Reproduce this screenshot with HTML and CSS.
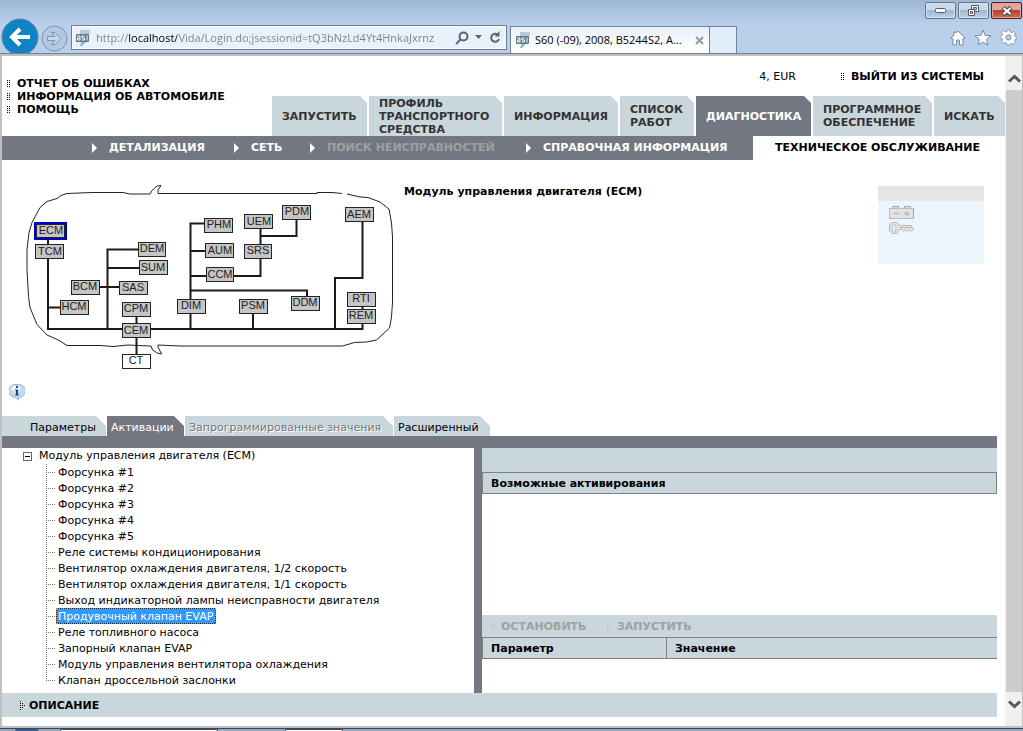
FILE: index.html
```html
<!DOCTYPE html>
<html lang="ru">
<head>
<meta charset="utf-8">
<title>S60 (-09), 2008, B5244S2</title>
<link rel="stylesheet" href="styles.css">
</head>
<body>
<svg class="defs" width="0" height="0" aria-hidden="true">
  <symbol id="asp" viewBox="0 0 14 16">
    <path d="M4 0h10v4l-3 1H4z" fill="#b9cadb"/><path d="M6 10h6l-6 6H4z" fill="#9db3c8"/>
    <rect x="0" y="4" width="13" height="8" rx="1" fill="#5d788f"/>
    <path d="M1 6h3v4H1.500V8H4M8.500 6H6v2h2.500v2H5.500M11 5.500v5" fill="none" stroke="#fff" stroke-width="1"/>
  </symbol>
  <symbol id="grip" viewBox="0 0 3 8"><path d="M0 .5h3M0 2.500h3M0 4.500h3M0 6.500h3" stroke="#000" stroke-dasharray="1 1"/></symbol>
  <symbol id="griparrow" viewBox="0 0 6 9"><path d="M0 .5h1M0 2.500h3M0 4.500h5M0 6.500h3M0 8.500h1" stroke="currentColor" stroke-dasharray="1 1"/></symbol>
</svg>

<header class="chrome">
  <div class="titlebar">
    <button class="win" aria-label="Свернуть"><svg width="12" height="6"><rect x=".5" y=".5" width="10" height="4" rx="1" fill="#fff" stroke="#555a68"/></svg></button>
    <button class="win" aria-label="Восстановить"><svg width="13" height="12"><path d="M4.500 .5h7v6h-7z" fill="#fff" stroke="#555a68"/><path d="M6.500 2.500h3v2h-3z" fill="#b8cbe0" stroke="#555a68"/><path d="M1.500 4.500h6v6h-6z" fill="#fff" stroke="#555a68"/><path d="M3.500 6.500h2v2h-2z" fill="#b8cbe0" stroke="#555a68"/></svg></button>
    <button class="win close" aria-label="Закрыть"><svg width="12" height="10"><path d="M2 1.500l8 7M10 1.500l-8 7" stroke="#555062" stroke-width="4.500"/><path d="M2.500 2l7 6M9.500 2l-7 6" stroke="#fff" stroke-width="2.200"/></svg></button>
  </div>
  <div class="toolbar">
    <button class="back" aria-label="Назад"><svg width="40" height="35" viewBox="0 0 40 35"><circle cx="20" cy="19" r="18" fill="#0e84c4" stroke="#65809b"/><path d="M30 19H13M20 11l-8 8 8 8" fill="none" stroke="#fff" stroke-width="4"/></svg></button>
    <button class="forward" aria-label="Вперёд"><svg width="27" height="27" viewBox="0 0 27 27"><circle cx="13.500" cy="13.500" r="12.500" fill="#b3c8e2" stroke="#7c92af"/><path d="M6.500 11.500h7.500l-3.500-4h3.500l6 6-6 6h-3.500l3.500-4H6.500z" fill="#c5d6ea" stroke="#7c92af"/></svg></button>
    <div class="address">
      <svg width="14" height="16"><use href="#asp"/></svg>
      <input class="url" type="text" aria-label="Адрес" value="http://localhost/Vida/Login.do;jsessionid=tQ3bNzLd4Yt4HnkaJxrnz">
      <button class="mini" aria-label="Поиск"><svg width="14" height="14"><circle cx="8.500" cy="5.500" r="4" fill="none" stroke="#5b6470" stroke-width="2"/><path d="M5.500 8.500L1 13" stroke="#5b6470" stroke-width="2"/></svg></button>
      <button class="mini" aria-label="Журнал"><svg width="8" height="5"><path d="M0 0h7L3.500 4z" fill="#5b6470"/></svg></button>
      <button class="mini" aria-label="Обновить"><svg width="12" height="13"><path d="M9.500 4.500A4 4 0 1 0 10 8" fill="none" stroke="#5b6470" stroke-width="2"/><path d="M10.500 0v5.500H5.500z" fill="#5b6470"/></svg></button>
    </div>
    <div class="btab"><svg width="14" height="16"><use href="#asp"/></svg><span class="btitle">S60 (-09), 2008, B5244S2, A...</span><button class="mini" aria-label="Закрыть вкладку"><svg width="9" height="9"><path d="M1 1l7 7M8 1L1 8" stroke="#999" stroke-width="2"/></svg></button></div>
    <button class="newtab" aria-label="Новая вкладка"></button>
    <div class="tools">
      <button class="mini" aria-label="Домой"><svg width="16" height="16"><path d="M8 1l7 7-1 1-1-.5V15H9.500v-5h-3v5H3V8.500L2 9 1 8l3-3V2h2v1z" fill="#fff" stroke="#7688a3"/></svg></button>
      <button class="mini" aria-label="Избранное"><svg width="18" height="17"><path d="M9 1l2.200 5.500 5.800.3-4.500 3.700 1.500 5.500-5-3-5 3 1.500-5.500L1 6.800l5.800-.3z" fill="#fff" stroke="#7688a3"/></svg></button>
      <button class="mini" aria-label="Сервис"><svg width="17" height="17" viewBox="0 0 17 17"><path d="M7 1h3l.5 2 1.500.5 1.800-1 1.700 1.700-1 1.800.5 1.500 2 .5v2l-2 .5-.5 1.500 1 1.800-1.700 1.700-1.800-1-1.500.5L10 16H7l-.5-2-1.500-.5-1.800 1-1.700-1.700 1-1.800L2 9.500 0 9V7l2-.5L2.500 5l-1-1.800L3.200 1.500l1.800 1L6.500 3z" fill="#fff" stroke="#7688a3" stroke-width=".8"/><circle cx="8.500" cy="8.500" r="2.500" fill="#b9d0ea" stroke="#7688a3"/></svg></button>
    </div>
  </div>
</header>

<div class="viewport">
<main class="page">
  <div class="masthead">
    <nav class="help">
      <a href="#"><svg width="3" height="8"><use href="#grip"/></svg>ОТЧЕТ ОБ ОШИБКАХ</a>
      <a href="#"><svg width="3" height="8"><use href="#grip"/></svg>ИНФОРМАЦИЯ ОБ АВТОМОБИЛЕ</a>
      <a href="#"><svg width="3" height="8"><use href="#grip"/></svg>ПОМОЩЬ</a>
    </nav>
    <div class="right">
      <div class="account"><span>4, EUR</span><a href="#"><svg width="3" height="8"><use href="#grip"/></svg>ВЫЙТИ ИЗ СИСТЕМЫ</a></div>
      <nav class="tabs">
        <a class="t1" href="#">ЗАПУСТИТЬ</a>
        <a class="t2" href="#">ПРОФИЛЬ ТРАНСПОРТНОГО СРЕДСТВА</a>
        <a class="t3" href="#">ИНФОРМАЦИЯ</a>
        <a class="t4" href="#">СПИСОК РАБОТ</a>
        <a class="t5 on" href="#">ДИАГНОСТИКА</a>
        <a class="t6" href="#">ПРОГРАММНОЕ ОБЕСПЕЧЕНИЕ</a>
        <a class="t7" href="#">ИСКАТЬ</a>
      </nav>
    </div>
  </div>
  <nav class="subnav">
    <a class="s1" href="#">ДЕТАЛИЗАЦИЯ</a>
    <a class="s2" href="#">СЕТЬ</a>
    <a class="s3 off" href="#">ПОИСК НЕИСПРАВНОСТЕЙ</a>
    <a class="s4" href="#">СПРАВОЧНАЯ ИНФОРМАЦИЯ</a>
    <a class="s5" href="#">ТЕХНИЧЕСКОЕ ОБСЛУЖИВАНИЕ</a>
  </nav>

  <section class="overview">
    <svg class="network" width="400" height="220" viewBox="0 170 400 220" role="img" aria-label="Сеть модулей управления">
      <g class="outline">
        <path d="M67 193.500l25-1h31l7 1.500h20l2-3.500 5-4.500 4-.5-3 4.500v3.500h159v-1h15l10 1"/>
        <path d="M347 194l13 3 8 .5 12 4.500 9 7 2.500 14 1 14v65l-1 15-2 11-13 12-10 2-12 .5-12 3.500H180l-22-1v2l3.500 7-4-1-5-3-1.500-4h-2l-21-1-15 1.500-13-1H67l-7-4.500-5-2.500-8-3.500-10-10.500-7-17-1.500-11-1.500-27v-20l2-17 3-10 8-15 7-6 10-3 4-3 6-2"/>
      </g>
      <g class="bus">
        <path d="M48 236v93h314.500V323M48 307.500h14M107.500 329V249.500H139M107.500 268H140M98 287h22M136.500 310v44M190.500 329V223.500H205M190.500 251H206M190.500 276H260.500V229M190.500 290.500H307V298M253 329V313M260.500 236H296.500V218M335 329V278H362.500V220M362.500 300v15"/>
      </g>
      <g class="nodes">
        <rect class="picked" x="35" y="223" width="31" height="16"/><rect x="36.500" y="224.500" width="28" height="13"/>
        <rect x="35.500" y="244.500" width="28" height="14"/><rect x="71.500" y="280.500" width="28" height="14"/><rect x="60.500" y="300.500" width="28" height="14"/>
        <rect x="138.500" y="242.500" width="27" height="14"/><rect x="139.500" y="260.500" width="28" height="14"/><rect x="119.500" y="281.500" width="28" height="13"/>
        <rect x="122.500" y="302.500" width="28" height="14"/><rect x="122.500" y="323.500" width="28" height="14"/><rect class="plain" x="122.500" y="354.500" width="28" height="14"/>
        <rect x="204.500" y="218.500" width="28" height="14"/><rect x="205.500" y="243.500" width="28" height="14"/><rect x="206.500" y="267.500" width="27" height="14"/>
        <rect x="177.500" y="299.500" width="28" height="14"/><rect x="239.500" y="299.500" width="28" height="14"/><rect x="291.500" y="296.500" width="28" height="14"/>
        <rect x="244.500" y="214.500" width="28" height="14"/><rect x="244.500" y="244.500" width="27" height="14"/><rect x="282.500" y="205.500" width="28" height="14"/>
        <rect x="345.500" y="207.500" width="28" height="14"/><rect x="347.500" y="292.500" width="28" height="14"/><rect x="347.500" y="309.500" width="28" height="14"/>
      </g>
      <g class="labels">
        <text x="51" y="234">ECM</text><text x="50" y="255">TCM</text><text x="85" y="290">BCM</text><text x="74" y="310">HCM</text>
        <text x="152" y="252">DEM</text><text x="153" y="271">SUM</text><text x="133" y="291">SAS</text><text x="136" y="312">CPM</text><text x="136" y="334">CEM</text><text x="136" y="364">CT</text>
        <text x="219" y="228">PHM</text><text x="220" y="254">AUM</text><text x="220" y="278">CCM</text><text x="191" y="309">DIM</text><text x="253" y="309">PSM</text><text x="305" y="306">DDM</text>
        <text x="259" y="225">UEM</text><text x="258" y="254">SRS</text><text x="297" y="215">PDM</text><text x="359" y="218">AEM</text><text x="361" y="302">RTI</text><text x="361" y="319">REM</text>
      </g>
    </svg>
    <button class="info" aria-label="Информация"><svg width="16" height="17" viewBox="0 0 16 17"><path d="M8 .5a7.500 6.500 0 0 1 2 13L9.500 16 6 13.500A7.500 6.500 0 0 1 8 .5z" fill="#c2dbf2" stroke="#9ab2cc"/><ellipse cx="7" cy="4.500" rx="4.500" ry="3" fill="#eef7fd"/><path d="M7 2h2v2H7zM6 5.500h3v5h1v1H6v-1h1v-4H6z" fill="#174b88"/></svg></button>
    <h1>Модуль управления двигателя (ECM)</h1>
    <aside class="status">
      <div class="statushead"></div>
      <svg width="26" height="31" viewBox="0 0 26 31" role="img" aria-label="Аккумулятор и ключ">
        <path d="M3.500 3V.5h6V3M15.500 3V.5h6V3" fill="#dedee6" stroke="#a0a0cb"/><rect x=".5" y="2.500" width="24" height="10" fill="#e3e3e3" stroke="#bbb"/><path d="M24.500 2v10" stroke="#a0a0cb"/><path d="M4 7.500h6M15 7.500h6M18 5v5" stroke="#bbb" stroke-width="1.500"/>
        <path d="M3 16.500h5l2 3h12.500v2l2 1-2 3-2-2-2 2-2-2-2 2-2-2h-2.500l-2 4H3L.5 25v-6z" fill="#e3e3e3" stroke="#bbb"/><ellipse cx="5" cy="22.500" rx="2" ry="4" fill="#eaf6fb" stroke="#bbb"/><path d="M11 21.500h11" stroke="#bbb"/>
      </svg>
    </aside>
  </section>

  <nav class="worktabs">
    <button class="w1">Параметры</button><button class="w2 on">Активации</button><button class="w3" disabled>Запрограммированные значения</button><button class="w4">Расширенный</button>
  </nav>

  <section class="work">
    <div class="tree">
      <div class="root"><button class="fold" aria-label="Свернуть ветвь"></button><span>Модуль управления двигателя (ECM)</span></div>
      <ul>
        <li><a href="#">Форсунка #1</a></li>
        <li><a href="#">Форсунка #2</a></li>
        <li><a href="#">Форсунка #3</a></li>
        <li><a href="#">Форсунка #4</a></li>
        <li><a href="#">Форсунка #5</a></li>
        <li><a href="#">Реле системы кондиционирования</a></li>
        <li><a href="#">Вентилятор охлаждения двигателя, 1/2 скорость</a></li>
        <li><a href="#">Вентилятор охлаждения двигателя, 1/1 скорость</a></li>
        <li><a href="#">Выход индикаторной лампы неисправности двигателя</a></li>
        <li><a class="sel" href="#">Продувочный клапан EVAP</a></li>
        <li><a href="#">Реле топливного насоса</a></li>
        <li><a href="#">Запорный клапан EVAP</a></li>
        <li><a href="#">Модуль управления вентилятора охлаждения</a></li>
        <li><a href="#">Клапан дроссельной заслонки</a></li>
      </ul>
    </div>
    <div class="detail">
      <div class="strip"></div>
      <h2>Возможные активирования</h2>
      <div class="space"></div>
      <div class="actions">
        <button class="stop" disabled><svg width="6" height="9"><use href="#griparrow"/></svg>ОСТАНОВИТЬ</button>
        <button disabled><svg width="6" height="9"><use href="#griparrow"/></svg>ЗАПУСТИТЬ</button>
      </div>
      <table class="values"><tr><th class="param">Параметр</th><th>Значение</th></tr></table>
    </div>
  </section>
  <button class="description"><svg width="6" height="9"><use href="#griparrow"/></svg>ОПИСАНИЕ</button>
</main>
<div class="scroll">
  <button class="mini" aria-label="Вверх"><svg width="13" height="9"><path d="M1 7.500l5.500-5 5.500 5" fill="none" stroke="#585858" stroke-width="3"/></svg></button>
  <div class="thumb"></div>
  <button class="mini" aria-label="Вниз"><svg width="13" height="9"><path d="M1 1.500l5.500 5 5.500-5" fill="none" stroke="#585858" stroke-width="3"/></svg></button>
</div>
</div>
<footer class="taskbar"><span class="orb"></span><span class="task wide"></span><span class="task"></span></footer>
</body>
</html>
```
FILE: styles.css
```css
* { box-sizing: border-box; }
body {
  margin: 0;
  height: 100vh;
  display: flex;
  flex-direction: column;
  overflow: hidden;
  background: #fff;
  color: #000;
  font: 11px/13px Verdana, "DejaVu Sans", sans-serif;
}
button { border: 0; padding: 0; margin: 0; background: none; font: inherit; color: inherit; }
a { color: inherit; text-decoration: none; }
svg { display: block; flex: none; }
.defs { position: absolute; }

/* browser frame */
.chrome {
  flex: none;
  background: linear-gradient(#9cb6d3, #b9d0eb 24px);
  border-bottom: 1px solid #6f8299;
  font: 11px/16px "Open Sans", "Noto Sans", sans-serif;
}
.titlebar { height: 19px; display: flex; justify-content: flex-end; gap: 2px; padding: 2px 1px 0 0; }
.win {
  width: 31px;
  height: 17px;
  display: grid;
  place-items: center;
  border: 1px solid #64748b;
  border-radius: 2px;
  background: linear-gradient(#c8d9eb 45%, #9fb6d0 50%, #bdd2e8);
  box-shadow: inset 0 0 0 1px #d4e2f0;
}
.win.close { background: linear-gradient(#e2a79c 45%, #bf3f2a 50%, #cd6a54); box-shadow: inset 0 0 0 1px #e0a596; border-color: #571c1c; }
.toolbar { height: 34px; display: flex; align-items: flex-end; }
.back { width: 41px; height: 35px; overflow: hidden; }
.forward { width: 30px; height: 30px; }
.address {
  width: 436px;
  height: 25px;
  margin: 0 3px 3px 0;
  padding: 0 5px 0 4px;
  display: flex;
  align-items: center;
  gap: 6px;
  border: 1px solid #6b7b91;
  background: #e9f1fb;
  box-shadow: inset 0 0 0 1px #fff;
}
.url {
  flex: 1;
  min-width: 0;
  height: 20px;
  padding: 0;
  border: 0;
  outline: 0;
  font: inherit;
  -webkit-text-fill-color: transparent;
  background: linear-gradient(90deg, #7c8087 33px, #000 33px 81px, #7c8087 81px);
  -webkit-background-clip: text;
  background-clip: text;
}
.mini { display: grid; place-items: center; }
.btab {
  width: 200px;
  height: 27px;
  padding: 0 5px;
  display: flex;
  align-items: center;
  gap: 5px;
  border: 1px solid #6f8299;
  border-bottom: 0;
  background: linear-gradient(#e8eff8, #fff 80%);
}
.btitle { flex: 1; white-space: nowrap; }
.newtab { width: 27px; height: 27px; border: 1px solid #6f8299; border-width: 1px 1px 0 0; background: #e0ecf9; }
.tools { margin-left: auto; align-self: center; display: flex; align-items: center; gap: 8px; padding: 3px 6px 0 0; }

.viewport { flex: 1; min-height: 0; display: flex; border: 2px solid #c0c0c0; border-width: 2px 1px 2px 2px; }
.page { flex: 1; min-width: 0; display: flex; flex-direction: column; padding-bottom: 9px; }
.scroll { width: 17px; padding-left: 1px; background: #f0f0f0; display: flex; flex-direction: column; }
.scroll .mini { height: 34px; padding-top: 10px; }
.scroll .mini:last-child { padding: 0 0 10px; }
.thumb { flex: 1; background: #cdcdcd; }

/* header */
.masthead { height: 80px; display: flex; justify-content: space-between; font-weight: bold; }
.help { padding: 21px 0 0 5px; }
.help a, .account a { display: flex; align-items: center; gap: 7px; }
.right { display: flex; flex-direction: column; justify-content: space-between; }
.account { display: flex; justify-content: flex-end; gap: 45px; padding: 14px 21px 0 0; }
.account span { font-weight: normal; }
.tabs { display: flex; gap: 2px; color: #333; }
.tabs a {
  height: 40px;
  padding-left: 10px;
  display: flex;
  align-items: center;
  background: #c9d6dc;
  clip-path: polygon(0 0, calc(100% - 7px) 0, 100% 7px, 100% 100%, 0 100%);
}
.tabs .on { background: #737782; color: #fff; }
.t1 { width: 95px; }
.t2 { width: 133px; }
.t3 { width: 114px; }
.t4 { width: 74px; }
.t5 { width: 115px; }
.t6 { width: 119px; }
.t7 { width: 71px; }
.subnav { height: 24px; display: flex; background: #737782; color: #fff; font-weight: bold; line-height: 24px; white-space: nowrap; padding-left: 90px; }
.subnav a { display: flex; align-items: center; gap: 12px; }
.subnav a::before { content: ""; border: 5px solid transparent; border-left-color: #fff; border-right: 0; }
.subnav .off { color: #a0a0a0; }
.s1 { width: 142px; }
.s2 { width: 76px; }
.s3 { width: 216px; }
.s4 { width: 227px; }
.subnav .s5 { flex: 1; padding-left: 22px; background: #fff; color: #000; }
.subnav .s5::before { display: none; }

/* module network */
.overview {
  height: 256px;
  display: grid;
  grid-template: 220px 36px / 402px 1fr 106px;
  padding-right: 21px;
}
.network { grid-area: 1 / 1; margin: 10px 0 0 -2px; }
.outline { fill: none; stroke: #222; }
.bus { fill: none; stroke: #1f1a17; stroke-width: 2; }
.nodes rect { fill: #c5c5c5; stroke: #222; }
.nodes .plain { fill: #fff; }
.nodes .picked { stroke: #0000c0; stroke-width: 2; }
.labels { font: 11px "Liberation Sans", Arial, sans-serif; fill: #222; text-anchor: middle; }
.info { grid-area: 2 / 1; margin: 4px 0 0 7px; justify-self: start; align-self: start; }
h1 { grid-area: 1 / 2; margin: 25px 0 0; font-size: 11px; line-height: 13px; }
.status { grid-area: 1 / 3; height: 78px; margin-top: 26px; background: #eaf6fb; }
.statushead { height: 15px; background: #e6e6e6; }
.status svg { margin: 5px 0 0 11px; }

/* work area */
.worktabs { display: flex; gap: 1px; margin-right: 8px; height: 32px; border-bottom: 12px solid #737782; }
.worktabs button {
  height: 20px;
  padding: 2px 0 0 4px;
  text-align: left;
  white-space: nowrap;
  background: #c9d6dc;
  clip-path: polygon(0 0, calc(100% - 10px) 0, 100% 10px, 100% 100%, 0 100%);
}
.worktabs .w1 { width: 104px; padding-left: 28px; }
.worktabs .w2 { width: 77px; }
.worktabs .w3 { width: 208px; color: #777; text-shadow: 1px 1px #fff; }
.worktabs .w4 { width: 96px; }
.worktabs .on { background: #737782; color: #fff; }
.work { flex: 1; min-height: 0; display: grid; grid-template-columns: 480fr 515fr; margin-right: 8px; }
.tree { border-right: 8px solid #737782; line-height: 16px; white-space: nowrap; overflow: hidden; }
.root { display: flex; align-items: center; padding-left: 21px; height: 16px; line-height: 18px; }
.fold { width: 9px; height: 9px; margin-right: 7px; border: 1px solid #666; display: grid; place-items: center; }
.fold::before { content: ""; width: 5px; height: 1px; background: #000; }
.tree ul { list-style: none; margin: 0; padding: 0 0 0 44px; }
.tree li { height: 16px; display: flex; align-items: center; background: repeating-linear-gradient(#777 0 1px, transparent 1px 2px) 0 0 / 1px 100% no-repeat; }
.tree li:last-child { background-size: 1px 8px; }
.tree li::before { content: ""; width: 9px; height: 1px; background: repeating-linear-gradient(90deg, #777 0 1px, transparent 1px 2px); }
.tree li a { height: 16px; padding: 0 2px 0 1px; margin-left: 1px; border: 1px solid transparent; line-height: 16px; }
.tree .sel {
  color: #fff;
  border: 1px dotted #f09030;
  background: linear-gradient(#39f, #39f) padding-box, linear-gradient(#222, #222) border-box;
}
.detail { display: flex; flex-direction: column; }
.strip { height: 24px; background: #c9d6dc; }
h2 { margin: 0; height: 22px; padding-left: 8px; font-size: 11px; line-height: 22px; border: 1px solid #808080; background: #c9d6dc; }
.space { flex: 1; }
.actions { height: 22px; display: flex; align-items: center; background: #c9d6dc; padding-left: 9px; color: #a0a0a0; font-weight: bold; }
.actions button { display: flex; align-items: center; gap: 4px; color: #a0a0a0; }
.actions svg { color: #b8bfc4; }
.stop { width: 116px; }
.values { width: 100%; margin-bottom: 34px; border-collapse: collapse; table-layout: fixed; background: #c9d6dc; }
.values th { height: 21px; padding: 0 0 0 8px; text-align: left; border: 1px solid #808080; border-right: 0; }
.values .param { width: 184px; }
.description { flex: none; height: 24px; margin-right: 8px; padding-left: 18px; display: flex; align-items: center; gap: 3px; background: #c9d6dc; font-weight: bold; }

.taskbar { flex: none; height: 3px; display: flex; background: #8fa9c6; border-top: 1px solid #3c4654; }
.orb { width: 24px; margin-left: 15px; background: #2d5f91; border-radius: 12px 12px 0 0; }
.task { width: 58px; margin-left: 67px; background: #fff; border: 1px solid #3c4654; border-bottom: 0; border-radius: 2px 2px 0 0; }
.task.wide { width: 158px; margin-left: 21px; }
```
